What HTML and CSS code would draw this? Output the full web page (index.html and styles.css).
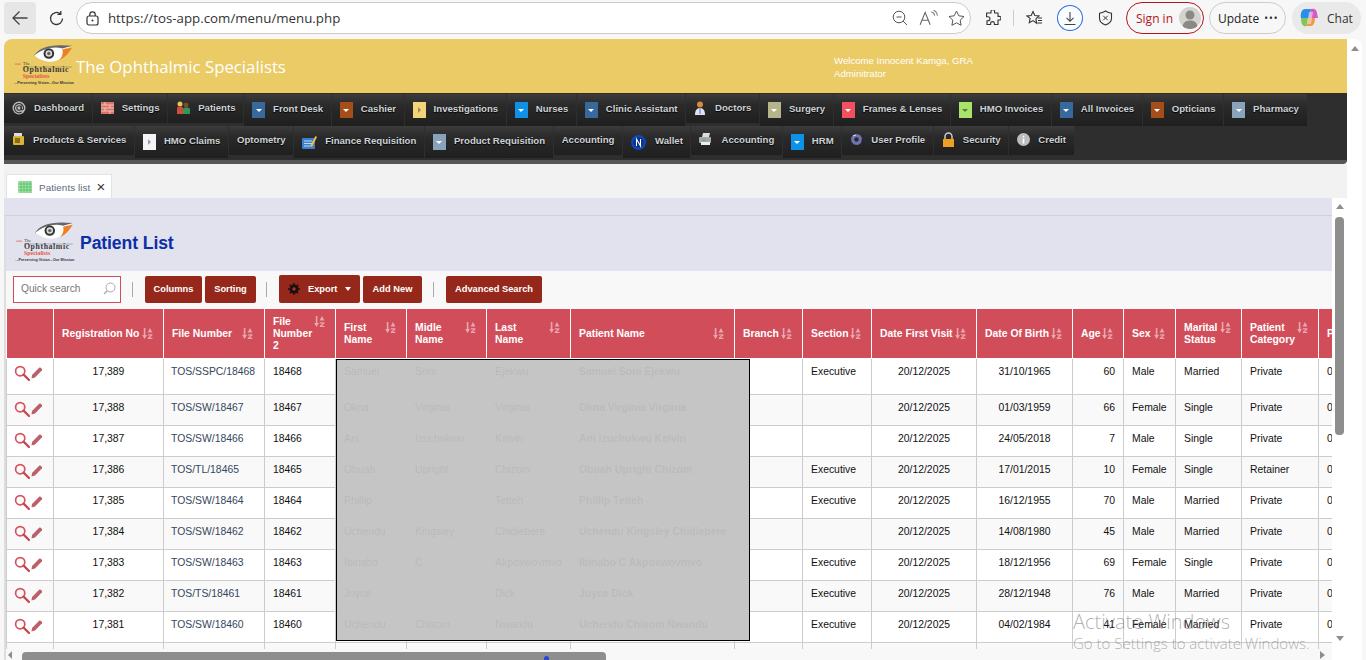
FILE: index.html
```html
<!DOCTYPE html>
<html lang="en">
<head>
<meta charset="utf-8">
<title>Patient List</title>
<link rel="stylesheet" href="styles.css">
</head>
<body>
<svg class="sprite" width="0" height="0" aria-hidden="true">
  <symbol id="sort" viewBox="0 0 11 11">
    <path d="M1.800 0h1.600v7h1.600L2.600 11 .2 7h1.600z" fill="#fff"/>
    <path d="M8 0l2.400 4.600H5.600z" fill="#fff"/>
    <path d="M5.800 6.200h4.600v1.200L7.600 9.800h2.800V11H5.800V9.800l2.800-2.400H5.800z" fill="#fff"/>
  </symbol>
  <symbol id="mag" viewBox="0 0 16 16">
    <circle cx="6.200" cy="6.200" r="4.600" fill="none" stroke="#d8525c" stroke-width="1.700"/>
    <path d="M9.600 9.600 L15 15" stroke="#c9444e" stroke-width="2.200" stroke-linecap="round"/>
  </symbol>
  <symbol id="pen" viewBox="0 0 12 12">
    <path d="M.5 11.500 L1 8 L8.200 .8 C9.400 -.2 11.600 1.800 11 3.200 L4 10.500Z" fill="#bd5f66"/>
  </symbol>
</svg>

<div class="chrome">
  <button class="back" aria-label="Back"><svg width="18" height="18" viewBox="0 0 18 18"><path d="M16.500 9H2M8.500 2.500 2 9l6.500 6.500" fill="none" stroke="#444" stroke-width="1.300"/></svg></button>
  <span class="reload"><svg width="17" height="17" viewBox="0 0 17 17"><path d="M14.500 8.500a6 6 0 1 1-2-4.500M12.800 1v3.400H9.400" fill="none" stroke="#333" stroke-width="1.300"/></svg></span>
  <div class="address">
    <svg class="lock" width="13" height="15" viewBox="0 0 13 15"><rect x="1" y="5" width="11" height="9" rx="2" fill="none" stroke="#333" stroke-width="1.200"/><path d="M3.800 5V3.500a2.700 2.700 0 0 1 5.400 0V5" fill="none" stroke="#333" stroke-width="1.200"/><circle cx="6.500" cy="9.500" r="1" fill="#333"/></svg>
    <span class="url">https://tos-app.com/menu/menu.php</span>
    <svg class="zoomout" width="16" height="16" viewBox="0 0 16 16"><circle cx="7" cy="7" r="5.800" fill="none" stroke="#555"/><path d="M4.500 7h5M11.200 11.200 15 15" stroke="#555" fill="none"/></svg>
    <svg class="read" width="19" height="16" viewBox="0 0 17 14"><path d="M1 13 5.500 2 10 13M2.700 9h5.600" fill="none" stroke="#666"/><path d="M11 1.500c2 .8 3 2 3 3.500M13 0c2.200 1 3.400 3 3.400 5" fill="none" stroke="#888"/></svg>
    <svg class="fav" width="17" height="16" viewBox="0 0 17 16"><path d="M8.500 1l2.300 4.800 5.200.7-3.800 3.600.9 5.200-4.600-2.500-4.600 2.500.9-5.200L1 6.500l5.200-.7z" fill="none" stroke="#555"/></svg>
  </div>
  <svg class="ext" width="16" height="16" viewBox="0 0 16 16"><path d="M6 1.500a1.800 1.800 0 0 1 3.600 0V3H13v3.400h1.200a1.800 1.800 0 0 1 0 3.600H13v4.500H9.400v-1a1.900 1.900 0 0 0-3.800 0v1H2v-3.700h1a2 2 0 0 0 0-4H1.600V3H6z" fill="none" stroke="#333" stroke-width="1.100"/></svg>
  <span class="sep"></span>
  <svg class="favs" width="17" height="16" viewBox="0 0 17 16"><path d="M7 1.500l1.800 4 4.200.5-3.100 2.900.8 4.300L7 10.600l-3.700 2.100.8-4.300L1 6l4.200-.5z" fill="none" stroke="#333" stroke-width="1.100"/><path d="M12 8h4M12 10.500h4M11.500 13H16" stroke="#333"/></svg>
  <span class="dl"><svg width="14" height="15" viewBox="0 0 14 15"><path d="M7 1v9M3.500 6.800 7 10.300l3.500-3.500M1.500 13.500h11" fill="none" stroke="#444" stroke-width="1.100"/></svg></span>
  <svg class="shield" width="15" height="16" viewBox="0 0 15 16"><path d="M7.500 1c2 1.300 4 2 6 2.200v5c0 3.200-2.500 5.500-6 6.800-3.500-1.300-6-3.600-6-6.800v-5c2-.2 4-.9 6-2.200z" fill="none" stroke="#333" stroke-width="1.100"/><path d="M5.300 5.800l4.400 4.400M9.700 5.800l-4.400 4.400" stroke="#333"/></svg>
  <div class="signin"><span>Sign in</span><span class="avatar"><svg width="22" height="22" viewBox="0 0 22 22"><circle cx="11" cy="8" r="4.500" fill="#8b8985"/><path d="M3.500 20c.5-5 3.500-6.500 7.500-6.500s7 1.500 7.500 6.500c-2 1.500-4.500 2-7.500 2s-5.500-.5-7.500-2z" fill="#8b8985"/></svg></span></div>
  <div class="update"><span>Update</span><span class="dots">&#8226;&#8226;&#8226;</span></div>
  <div class="chat">
    <svg width="22" height="22" viewBox="0 0 22 22"><path d="M7 2h6l-2 9H3C2 6 4 2 7 2z" fill="#2a8ee8"/><path d="M3 11h7l-1.500 8c-3 1-5.500-1-5.500-8z" fill="#7ec85a"/><path d="M8.500 19l1.500-8h7c0 5-2 8-4 8z" fill="#f09a3e"/><path d="M13 2c3-.5 5.500 0 6 4l1 5h-9z" fill="#d55bc5"/><path d="M11 5h4l-2 12H9z" fill="#e8e8e8" opacity=".6"/></svg>
    <span>Chat</span>
  </div>
</div>

<div class="viewport">
  <div class="frame">
    <header class="brand">
      <svg class="brand-logo" viewBox="0 0 62 46">
        <path d="M21 11 C26 3 38 0 59 2 C55 3 52 4 50 5 C54 8 52 12 47 15 C39 20 28 17 21 11Z" fill="#fff"/>
        <path d="M20 12 C26 2 38 -1 60 1 L50 4 C41 1 29 4 20 12Z" fill="#666"/>
        <path d="M50 5 L60 3 C57 8 53 13 47 16 C50 12 51 9 50 5Z" fill="#ef7f22"/>
        <circle cx="36" cy="9" r="5.500" fill="#333"/>
        <circle cx="36" cy="9" r="3.400" fill="#ddd"/>
        <circle cx="36" cy="9" r="1.800" fill="#666"/>
        <path d="M1 20 H7" stroke="#e2574c" stroke-width=".8"/>
        <text x="9" y="21" class="lg-the">The</text>
        <path d="M9 23 H60" stroke="#555" stroke-width=".4"/>
        <text x="9" y="28" class="lg-oph">Ophthalmic</text>
        <text x="9" y="34.500" class="lg-spe">Specialists</text>
        <text x="0" y="41" class="lg-tag">...Preserving Vision...Our Mission</text>
      </svg>
      <div class="brand-name">The Ophthalmic Specialists</div>
      <div class="welcome"><div>Welcome Innocent Kamga, GRA</div><div>Adminitrator</div></div>
    </header>

    <nav class="nav">
      <div class="nav-row">
        <a class="item"><svg class="gl" width="14" height="14" viewBox="0 0 14 14"><circle cx="7" cy="7" r="6.500" fill="#b9b9b9"/><circle cx="7" cy="7" r="2.200" fill="none" stroke="#333" stroke-width="1.100"/><path d="M9.300 4.600v3.300c0 1.600 2.300 1.200 2.300-1A4.600 4.600 0 1 0 9.500 11" fill="none" stroke="#333" stroke-width="1.100"/></svg>Dashboard</a>
        <a class="item"><svg class="gl" width="13" height="12" viewBox="0 0 13 12"><rect width="13" height="12" fill="#d9736b"/><path d="M0 3h13M0 6h13M0 9h13M4 0v3M9 3v3M4 6v3M9 9v3" stroke="#f3c4b8"/></svg>Settings</a>
        <a class="item"><svg class="gl" width="14" height="13" viewBox="0 0 14 13"><circle cx="4" cy="3" r="2.500" fill="#e6c65a"/><path d="M1 13V7c0-2 6-2 6 0v6z" fill="#d14b3e"/><circle cx="10" cy="4" r="2.500" fill="#7a4a2a"/><path d="M7 13V8c0-2 7-2 7 0v5z" fill="#2f9a4f"/></svg>Patients</a>
        <a class="item tall"><span class="tile t-blue"></span>Front Desk</a>
        <a class="item tall"><span class="tile t-rust"></span>Cashier</a>
        <a class="item tall"><span class="tile t-sand side"></span>Investigations</a>
        <a class="item tall"><span class="tile t-sky"></span>Nurses</a>
        <a class="item tall"><span class="tile t-blue"></span>Clinic Assistant</a>
        <a class="item"><svg class="gl doc" width="10" height="14" viewBox="0 0 10 14"><circle cx="5" cy="3.500" r="3" fill="#d98b3c"/><path d="M0 14c0-5 2-7 5-7s5 2 5 7z" fill="#dfe3f2"/><path d="M5 7v6" stroke="#5a6bb0"/></svg>Doctors</a>
        <a class="item tall"><span class="tile t-khaki"></span>Surgery</a>
        <a class="item tall"><span class="tile t-red"></span>Frames &amp; Lenses</a>
        <a class="item tall"><span class="tile t-lime dark"></span>HMO Invoices</a>
        <a class="item tall"><span class="tile t-blue"></span>All Invoices</a>
        <a class="item tall"><span class="tile t-rust"></span>Opticians</a>
        <a class="item tall"><span class="tile t-steel"></span>Pharmacy</a>
      </div>
      <div class="nav-row">
        <a class="item"><svg class="gl" width="13" height="13" viewBox="0 0 13 13"><rect x="2" y="0" width="8" height="3" fill="#ddd"/><rect x="1" y="3" width="11" height="9" rx="1" fill="#d9b53a"/><rect x="3" y="5" width="5" height="5" fill="#8a6a1a"/></svg>Products &amp; Services</a>
        <a class="item tall"><span class="tile t-white side grey"></span>HMO Claims</a>
        <a class="item">Optometry</a>
        <a class="item tall"><svg class="gl fin" width="15" height="13" viewBox="0 0 15 13"><rect y="2" width="13" height="11" rx="1" fill="#3a7fd0"/><path d="M2 5h8M2 7.500h8M2 10h6" stroke="#bcd8f5"/><path d="M8 10 13.500 0 15 1 10 11z" fill="#f0c040"/></svg>Finance Requisition</a>
        <a class="item tall"><span class="tile t-steel"></span>Product Requisition</a>
        <a class="item">Accounting</a>
        <a class="item tall wal"><svg class="gl" width="15" height="15" viewBox="0 0 15 15"><circle cx="7.500" cy="7.500" r="7.500" fill="#0c49b8"/><circle cx="7.500" cy="7.500" r="5" fill="#092f80"/><path d="M5.500 11V4l4 7V4" fill="none" stroke="#fff" stroke-width="1.100"/></svg>Wallet</a>
        <a class="item"><svg class="gl" width="14" height="13" viewBox="0 0 14 13"><path d="M4 0h7l-1 4H3z" fill="#ddd"/><rect y="4" width="12" height="6" rx="1" fill="#a8a8a8"/><rect x="2" y="9" width="9" height="3" fill="#eee"/><path d="M3 7h4" stroke="#33c233"/></svg>Accounting</a>
        <a class="item tall"><span class="tile t-sky"></span>HRM</a>
        <a class="item"><svg class="gl" width="13" height="13" viewBox="0 0 13 13"><path d="M6.500 1 10 2l2 3-1 5-3 2-4-.5L1.500 9 1 5 3 2z" fill="#6f74b0"/><circle cx="6.500" cy="6.500" r="2.200" fill="#2a2a2a"/><path d="M3 3l3-1" stroke="#dde" stroke-width="1"/></svg>User Profile</a>
        <a class="item"><svg class="gl" width="13" height="15" viewBox="0 0 13 15"><path d="M3 7V4.500a3.500 3.500 0 0 1 7 0V7" fill="none" stroke="#ccc" stroke-width="1.500"/><rect x="1" y="7" width="11" height="8" fill="#f0a020"/></svg>Security</a>
        <a class="item"><svg class="gl" width="13" height="13" viewBox="0 0 13 13"><circle cx="6.500" cy="6.500" r="6.500" fill="#bdbdbd"/><rect x="5.700" y="5.500" width="1.600" height="5" fill="#fff"/><rect x="5.700" y="2.800" width="1.600" height="1.600" fill="#fff"/></svg>Credit</a>
      </div>
    </nav>

    <div class="tabstrip">
      <div class="tab">
        <svg width="14" height="12" viewBox="0 0 14 12"><rect width="14" height="12" fill="#a5e3a5"/><path d="M0 3h14M0 6h14M0 9h14M3 0v12M6 0v12M9 0v12M12 0v12" stroke="#4fb86a" stroke-width=".7"/></svg>
        <span class="tab-label">Patients list</span>
        <span class="tab-x">&#215;</span>
      </div>
    </div>

    <div class="work">
      <div class="column">
        <div class="band"></div>
        <section class="panel">
          <div class="panel-head">
            <svg class="head-logo" viewBox="0 0 62 46">
              <path d="M21 11 C26 3 38 0 59 2 C55 3 52 4 50 5 C54 8 52 12 47 15 C39 20 28 17 21 11Z" fill="#fff"/>
              <path d="M20 12 C26 2 38 -1 60 1 L50 4 C41 1 29 4 20 12Z" fill="#666"/>
              <path d="M50 5 L60 3 C57 8 53 13 47 16 C50 12 51 9 50 5Z" fill="#ef7f22"/>
              <circle cx="36" cy="9" r="5.500" fill="#333"/>
              <circle cx="36" cy="9" r="3.400" fill="#ddd"/>
              <circle cx="36" cy="9" r="1.800" fill="#666"/>
              <path d="M1 20 H7" stroke="#e2574c" stroke-width=".8"/>
              <text x="9" y="21" class="lg-the">The</text>
              <path d="M9 23 H60" stroke="#555" stroke-width=".4"/>
              <text x="9" y="28" class="lg-oph">Ophthalmic</text>
              <text x="9" y="34.500" class="lg-spe">Specialists</text>
              <text x="0" y="41" class="lg-tag">...Preserving Vision...Our Mission</text>
            </svg>
            <h1>Patient List</h1>
          </div>
          <div class="toolbar">
            <div class="quick"><span>Quick search</span><svg width="13" height="13" viewBox="0 0 13 13"><circle cx="7.500" cy="5.500" r="4.500" fill="none" stroke="#aaa"/><path d="M4.300 8.700 1 12" stroke="#aaa" stroke-width="1.300"/></svg></div>
            <span class="bar"></span>
            <button class="btn b-col">Columns</button>
            <button class="btn b-sort">Sorting</button>
            <span class="bar b2"></span>
            <button class="btn b-exp"><svg width="12" height="12" viewBox="0 0 12 12"><circle cx="6" cy="6" r="4.500" fill="#1c1010"/><path d="M6 0v12M0 6h12M1.800 1.800l8.400 8.400M10.200 1.800l-8.400 8.400" stroke="#1c1010" stroke-width="1.400"/><circle cx="6" cy="6" r="1.700" fill="#a33"/></svg><span>Export</span><i class="caret"></i></button>
            <button class="btn b-add">Add New</button>
            <span class="bar b3"></span>
            <button class="btn b-adv">Advanced Search</button>
          </div>
          <div class="table-wrap">
            <table class="grid">
              <colgroup>
                <col class="c-act"><col class="c-reg"><col class="c-file"><col class="c-f2"><col class="c-first"><col class="c-mid"><col class="c-last"><col class="c-name"><col class="c-branch"><col class="c-sec"><col class="c-date"><col class="c-dob"><col class="c-age"><col class="c-sex"><col class="c-mar"><col class="c-cat"><col class="c-ph">
              </colgroup>
              <thead>
                <tr>
                  <th></th>
                  <th><div class="th"><span>Registration No</span><svg class="si"><use href="#sort"/></svg></div></th>
                  <th><div class="th pr"><span>File Number</span><svg class="si"><use href="#sort"/></svg></div></th>
                  <th><div class="th"><span>File<br>Number<br>2</span><svg class="si"><use href="#sort"/></svg></div></th>
                  <th><div class="th"><span>First<br>Name</span><svg class="si"><use href="#sort"/></svg></div></th>
                  <th><div class="th"><span>Midle<br>Name</span><svg class="si"><use href="#sort"/></svg></div></th>
                  <th><div class="th"><span>Last<br>Name</span><svg class="si"><use href="#sort"/></svg></div></th>
                  <th><div class="th"><span>Patient Name</span><svg class="si"><use href="#sort"/></svg></div></th>
                  <th><div class="th"><span>Branch</span><svg class="si"><use href="#sort"/></svg></div></th>
                  <th><div class="th"><span>Section</span><svg class="si"><use href="#sort"/></svg></div></th>
                  <th><div class="th"><span>Date First Visit</span><svg class="si"><use href="#sort"/></svg></div></th>
                  <th><div class="th"><span>Date Of Birth</span><svg class="si"><use href="#sort"/></svg></div></th>
                  <th><div class="th"><span>Age</span><svg class="si"><use href="#sort"/></svg></div></th>
                  <th><div class="th"><span>Sex</span><svg class="si"><use href="#sort"/></svg></div></th>
                  <th><div class="th"><span>Marital<br>Status</span><svg class="si"><use href="#sort"/></svg></div></th>
                  <th><div class="th"><span>Patient<br>Category</span><svg class="si"><use href="#sort"/></svg></div></th>
                  <th><div class="th"><span>P</span></div></th>
                </tr>
              </thead>
              <tbody>
                <tr class="first"><td class="act"><svg class="mag"><use href="#mag"/></svg><svg class="pen"><use href="#pen"/></svg></td><td class="ctr">17,389</td><td class="fn">TOS/SSPC/18468</td><td>18468</td><td>Samuel</td><td>Soni</td><td>Ejekwu</td><td class="pn">Samuel Soni Ejekwu</td><td></td><td>Executive</td><td class="ctr">20/12/2025</td><td class="ctr">31/10/1965</td><td class="rgt">60</td><td>Male</td><td>Married</td><td>Private</td><td>0</td></tr>
                <tr><td class="act"><svg class="mag"><use href="#mag"/></svg><svg class="pen"><use href="#pen"/></svg></td><td class="ctr">17,388</td><td class="fn">TOS/SW/18467</td><td>18467</td><td>Okna</td><td>Virginia</td><td>Virginia</td><td class="pn">Okna Virginia Virginia</td><td></td><td></td><td class="ctr">20/12/2025</td><td class="ctr">01/03/1959</td><td class="rgt">66</td><td>Female</td><td>Single</td><td>Private</td><td>0</td></tr>
                <tr><td class="act"><svg class="mag"><use href="#mag"/></svg><svg class="pen"><use href="#pen"/></svg></td><td class="ctr">17,387</td><td class="fn">TOS/SW/18466</td><td>18466</td><td>Ani</td><td>Izuchukwu</td><td>Kelvin</td><td class="pn">Ani Izuchukwu Kelvin</td><td></td><td></td><td class="ctr">20/12/2025</td><td class="ctr">24/05/2018</td><td class="rgt">7</td><td>Male</td><td>Single</td><td>Private</td><td>0</td></tr>
                <tr><td class="act"><svg class="mag"><use href="#mag"/></svg><svg class="pen"><use href="#pen"/></svg></td><td class="ctr">17,386</td><td class="fn">TOS/TL/18465</td><td>18465</td><td>Obuah</td><td>Upright</td><td>Chizom</td><td class="pn">Obuah Upright Chizom</td><td></td><td>Executive</td><td class="ctr">20/12/2025</td><td class="ctr">17/01/2015</td><td class="rgt">10</td><td>Female</td><td>Single</td><td>Retainer</td><td>0</td></tr>
                <tr><td class="act"><svg class="mag"><use href="#mag"/></svg><svg class="pen"><use href="#pen"/></svg></td><td class="ctr">17,385</td><td class="fn">TOS/SW/18464</td><td>18464</td><td>Phillip</td><td></td><td>Tetteh</td><td class="pn">Phillip Tetteh</td><td></td><td>Executive</td><td class="ctr">20/12/2025</td><td class="ctr">16/12/1955</td><td class="rgt">70</td><td>Male</td><td>Married</td><td>Private</td><td>0</td></tr>
                <tr><td class="act"><svg class="mag"><use href="#mag"/></svg><svg class="pen"><use href="#pen"/></svg></td><td class="ctr">17,384</td><td class="fn">TOS/SW/18462</td><td>18462</td><td>Uchendu</td><td>Kingsley</td><td>Chidiebere</td><td class="pn">Uchendu Kingsley Chidiebere</td><td></td><td></td><td class="ctr">20/12/2025</td><td class="ctr">14/08/1980</td><td class="rgt">45</td><td>Male</td><td>Married</td><td>Private</td><td>0</td></tr>
                <tr><td class="act"><svg class="mag"><use href="#mag"/></svg><svg class="pen"><use href="#pen"/></svg></td><td class="ctr">17,383</td><td class="fn">TOS/SW/18463</td><td>18463</td><td>Ibinabo</td><td>C</td><td>Akpoxwovmvo</td><td class="pn">Ibinabo C Akpoxwovmvo</td><td></td><td>Executive</td><td class="ctr">20/12/2025</td><td class="ctr">18/12/1956</td><td class="rgt">69</td><td>Female</td><td>Single</td><td>Private</td><td>0</td></tr>
                <tr><td class="act"><svg class="mag"><use href="#mag"/></svg><svg class="pen"><use href="#pen"/></svg></td><td class="ctr">17,382</td><td class="fn">TOS/TS/18461</td><td>18461</td><td>Joyce</td><td></td><td>Dick</td><td class="pn">Joyce Dick</td><td></td><td>Executive</td><td class="ctr">20/12/2025</td><td class="ctr">28/12/1948</td><td class="rgt">76</td><td>Male</td><td>Married</td><td>Private</td><td>0</td></tr>
                <tr><td class="act"><svg class="mag"><use href="#mag"/></svg><svg class="pen"><use href="#pen"/></svg></td><td class="ctr">17,381</td><td class="fn">TOS/SW/18460</td><td>18460</td><td>Uchendu</td><td>Chisom</td><td>Nwandu</td><td class="pn">Uchendu Chisom Nwandu</td><td></td><td>Executive</td><td class="ctr">20/12/2025</td><td class="ctr">04/02/1984</td><td class="rgt">41</td><td>Female</td><td>Married</td><td>Private</td><td>0</td></tr>
                <tr><td></td><td></td><td></td><td></td><td></td><td></td><td></td><td></td><td></td><td></td><td></td><td></td><td></td><td></td><td></td><td></td><td></td></tr>
              </tbody>
            </table>
            <div class="redact"></div>
          </div>
          <div class="hscroll">
            <i class="arr-l"></i>
            <span class="hthumb"></span>
            <i class="dot"></i>
            <i class="arr-r"></i>
          </div>
        </section>
      </div>
      <aside class="vscroll">
        <i class="arr-u"></i>
        <span class="vthumb"></span>
        <i class="arr-d"></i>
      </aside>
    </div>
  </div>
  <aside class="outer-scroll"><i class="arr-u"></i></aside>
</div>

<div class="activate">
  <div class="act-1">Activate Windows</div>
  <div class="act-2">Go to Settings to activate Windows.</div>
</div>
</body>
</html>
```

FILE: styles.css
```css
* { box-sizing: border-box; }
html, body { margin: 0; padding: 0; height: 660px; overflow: hidden; }
body { background: #f7f7f7; font-family: "Liberation Sans", Arial, sans-serif; display: flex; flex-direction: column; position: relative; }
.sprite { position: absolute; }
.lg-the { font: 5px "Liberation Serif", serif; fill: #444; }
.lg-oph { font: bold 8.200px "Liberation Serif", serif; fill: #3a3a3a; letter-spacing: .6px; }
.lg-spe { font: bold 6.200px "Liberation Serif", serif; fill: #e2574c; }
.lg-tag { font: bold 3.900px "Liberation Sans", sans-serif; fill: #333; }

/* browser chrome */
.chrome { height: 39px; flex: none; display: flex; align-items: center; padding: 0 5px 3px 4px; }
.back { width: 32px; height: 32px; border: 0; border-radius: 4px; background: #e6e6e6; padding: 0; display: flex; align-items: center; justify-content: center; }
.reload { width: 17px; height: 17px; margin-left: 12px; display: block; }
.reload svg, .chrome > svg { display: block; flex: none; }
.address { margin-left: 11px; width: 898px; height: 32px; background: #fff; border: 1px solid #ccc; border-radius: 16px; display: flex; align-items: center; padding-left: 9px; }
.lock { flex: none; }
.url { margin-left: 9px; font: 13.300px "Open Sans", sans-serif; color: #333; flex: 1; }
.zoomout { margin-right: 11px; }
.read { margin-right: 10px; }
.fav { margin-right: 5px; }
.ext { margin-left: 14px; }
.sep { width: 1px; height: 16px; background: #ccc; margin: 0 12px; }
.favs { margin-left: 0; }
.dl { width: 26px; height: 26px; margin-left: 14px; border: 1.500px solid #2a6fdb; border-radius: 50%; display: flex; align-items: center; justify-content: center; background: #fafcff; }
.shield { margin-left: 15px; }
.signin { margin-left: 13px; width: 78px; height: 32px; border: 1.200px solid #b3151e; border-radius: 16px; display: flex; align-items: center; padding-left: 9px; font: 12px "Open Sans", sans-serif; color: #b3151e; flex: none; }
.avatar { margin-left: 6px; width: 22px; height: 22px; border-radius: 50%; background: #d5d3cf; overflow: hidden; display: block; }
.update { margin-left: 5px; width: 77px; height: 32px; border: 1px solid #ccc; border-radius: 16px; display: flex; align-items: center; padding-left: 8px; font: 12px "Open Sans", sans-serif; color: #222; flex: none; }
.dots { margin-left: 5px; font-size: 10px; letter-spacing: 1px; }
.chat { margin-left: 6px; width: 69px; height: 32px; border-radius: 16px; background: #e9e9e9; display: flex; align-items: center; padding-left: 6px; font: 12px "Open Sans", sans-serif; color: #333; flex: none; }
.chat span { margin-left: 7px; }

/* page frame */
.viewport { flex: 1; min-height: 0; margin: 0 4px 0 4px; display: flex; background: #fff; border-radius: 8px 8px 0 0; overflow: hidden; }
.frame { width: 1343px; flex: none; display: flex; flex-direction: column; }
.outer-scroll { flex: 1; background: #fff; padding-top: 7px; display: flex; flex-direction: column; align-items: center; }
.brand { height: 54px; flex: none; background: #eacb66; display: flex; align-items: flex-start; }
.brand-logo { width: 60px; height: 46px; margin: 5px 0 0 10px; flex: none; }
.brand-name { margin: 16px 0 0 2px; width: 758px; font: 400 16.800px "Open Sans", sans-serif; color: #fff; white-space: nowrap; flex: none; }
.welcome { margin-top: 15px; font-size: 9.650px; line-height: 13px; color: #fff; }

/* menu */
.nav { height: 71px; flex: none; background: #2e2e2e; border-bottom: 4px solid #565656; border-radius: 0 0 4px 0; padding-top: 1px; }
.nav-row { height: 32px; display: flex; align-items: flex-start; }
.item { height: 29px; display: flex; align-items: center; padding: 0 7.600px 2px 8px; margin-right: 1px; font-size: 9.600px; font-weight: 700; color: #cfd2d6; text-shadow: 0 1px 1px #000; white-space: nowrap; background: linear-gradient(#3c3c3c 0, #2a2a2a 35%, #1f1f1f 100%); }
.item.tall { height: 32px; padding-bottom: 4px; }
.tile { width: 13px; height: 16px; margin: 4px 8px 0 0; flex: none; display: flex; align-items: center; justify-content: center; }
.tile::after { content: ""; border-left: 3px solid transparent; border-right: 3px solid transparent; border-top: 3px solid #fff; }
.tile.dark::after { border-top-color: #5a7d35; }
.tile.side::after { border-top: 3px solid transparent; border-bottom: 3px solid transparent; border-right: 0; border-left: 3px solid #a9874a; }
.tile.side.grey::after { border-left-color: #8d9db5; }
.t-blue { background: #366a9c; }
.t-rust { background: #a64e1a; }
.t-sand { background: #f4d47a; }
.t-sky { background: #0e92e8; }
.t-khaki { background: #b6b48a; }
.t-red { background: #f0505f; }
.t-lime { background: #a9e36a; }
.t-steel { background: #8aa3bd; }
.t-white { background: #f4f4f4; }
.gl { flex: none; margin-right: 8px; }
.gl.doc { margin: 0 10px 0 1px; }
.gl.fin { margin: 4px 8px 0 0; }
.wal .gl { margin: 4px 9px 0 0; }

/* tabs */
.tabstrip { height: 34px; flex: none; background: #f2f2f2; padding: 10px 0 0 2px; }
.tab { width: 106px; height: 24px; background: #fff; border: 1px solid #dfe3ea; border-bottom: 0; display: flex; align-items: center; padding: 1px 0 0 11px; }
.tab svg { flex: none; }
.tab-label { margin-left: 7px; font-size: 9.800px; color: #5b6b7b; letter-spacing: .1px; white-space: nowrap; }
.tab-x { margin-left: 6px; font-size: 15px; line-height: 12px; color: #333; }

/* panel */
.work { flex: 1; min-height: 0; display: flex; }
.column { width: 1328px; flex: none; display: flex; flex-direction: column; }
.band { height: 17px; flex: none; background: #e1e2ee; }
.panel { flex: 1; min-height: 0; display: flex; flex-direction: column; border-top: 1px solid #d0d0d8; border-left: 2px solid #ddd; background: #f8f8f8; }
.panel-head { height: 55px; flex: none; background: #e1e2ee; display: flex; align-items: center; }
.head-logo { width: 62px; height: 44px; margin: 0 0 0 8px; flex: none; }
h1 { margin: 0 0 1px 4px; font-size: 17.600px; font-weight: 700; color: #0b2fa8; letter-spacing: -.1px; }
.toolbar { height: 38px; flex: none; background: #f8f8f8; display: flex; align-items: center; padding: 0 0 2px 7px; }
.quick { width: 108px; height: 27px; border: 1px solid #d24b58; background: #fff; display: flex; align-items: center; justify-content: space-between; padding: 0 4px 1px 7px; font-size: 10.200px; color: #777; }
.bar { width: 1px; height: 15px; background: #aaa; margin: 0 12px 0 11px; }
.bar.b2 { margin: 0 12px 0 10px; }
.bar.b3 { margin: 0 12px 0 11px; }
.btn { height: 27px; border: 0; border-radius: 2px; background: #96281b; color: #fff; font: 700 9.300px "Liberation Sans", sans-serif; padding: 0; display: flex; align-items: center; justify-content: center; }
.b-col { width: 57px; margin-right: 3px; }
.b-sort { width: 51px; }
.b-exp { width: 81px; height: 28px; margin-right: 3px; justify-content: flex-start; padding-left: 9px; }
.b-exp span { margin: 0 8px 0 8px; }
.caret { border-left: 3px solid transparent; border-right: 3px solid transparent; border-top: 4px solid #fff; }
.b-add { width: 59px; }
.b-adv { width: 96px; }

/* table */
.table-wrap { flex: 1; min-height: 0; overflow: hidden; position: relative; }
.grid { border-collapse: collapse; table-layout: fixed; width: 1396px; font-size: 10.400px; color: #111; background: #fff; }
.c-act { width: 47px; } .c-reg { width: 110px; } .c-file { width: 101px; } .c-f2 { width: 71px; }
.c-first { width: 71px; } .c-mid { width: 80px; } .c-last { width: 84px; } .c-name { width: 164px; }
.c-branch { width: 68px; } .c-sec { width: 69px; } .c-date { width: 105px; } .c-dob { width: 96px; }
.c-age { width: 51px; } .c-sex { width: 52px; } .c-mar { width: 66px; } .c-cat { width: 77px; } .c-ph { width: 88px; }
th { height: 49px; padding: 2px 10px 0 8px; background: #d14d5a; color: #fff; border: 1px solid #fff; border-top: 0; font-size: 10.400px; font-weight: 700; line-height: 12px; text-align: left; vertical-align: middle; }
.th { display: flex; justify-content: space-between; align-items: flex-start; white-space: nowrap; }
.th.pr { padding-right: 1px; }
.si { width: 11px; height: 11px; flex: none; opacity: .5; margin-top: 0; }
td { height: 31px; padding: 7px 8px 0; border: 1px solid #ccc; vertical-align: top; line-height: 12px; white-space: nowrap; overflow: hidden; }
tr.first td { height: 36px; }
tbody tr:nth-child(even) td { background: #f9f9f9; }
.ctr { text-align: center; }
.rgt { text-align: right; }
td.fn { color: #35465c; padding-left: 7px; }
.pn { font-weight: 700; color: #444; }
td.act { padding: 6px 0 0 7px; }
.mag { width: 16px; height: 16px; vertical-align: top; }
.pen { width: 12px; height: 12px; margin: 2px 0 0 1px; vertical-align: top; }
.redact { position: absolute; left: 330px; top: 50px; width: 414px; height: 282px; background: rgba(194,194,194,.95); border: 1px solid #000; }

/* scrollbars */
.hscroll { height: 11px; flex: none; background: #f8f8f8; display: flex; align-items: flex-end; position: relative; padding-left: 2px; }
.hthumb { margin-left: 10px; width: 584px; height: 8px; background: #8e8e8e; border-radius: 4px 4px 0 0; }
.arr-l { border-top: 4px solid transparent; border-bottom: 4px solid transparent; border-right: 4px solid #8e8e8e; margin-bottom: 1px; }
.arr-r { position: absolute; right: 7px; bottom: 1px; border-top: 4px solid transparent; border-bottom: 4px solid transparent; border-left: 5px solid #8e8e8e; }
.dot { position: absolute; left: 538px; bottom: 0; width: 5px; height: 4px; border-radius: 3px 3px 0 0; background: #3044d8; }
.vscroll { flex: 1; background: #fff; display: flex; flex-direction: column; align-items: center; padding-top: 6px; }
.arr-u { display: block; flex: none; border-left: 4px solid transparent; border-right: 4px solid transparent; border-bottom: 5px solid #8e8e8e; }
.arr-d { display: block; flex: none; margin-top: 201px; border-left: 4px solid transparent; border-right: 4px solid transparent; border-top: 5px solid #8e8e8e; }
.vthumb { display: block; flex: none; margin-top: 8px; width: 9px; height: 218px; background: #8e8e8e; border-radius: 4px; }

/* watermark */
.activate { position: absolute; left: 1073px; top: 609px; color: rgba(110,110,110,.55); font-family: "Open Sans", sans-serif; font-weight: 300; white-space: nowrap; pointer-events: none; }
.act-1 { font-size: 20px; line-height: 25px; }
.act-2 { font-size: 15px; line-height: 19px; }
```
